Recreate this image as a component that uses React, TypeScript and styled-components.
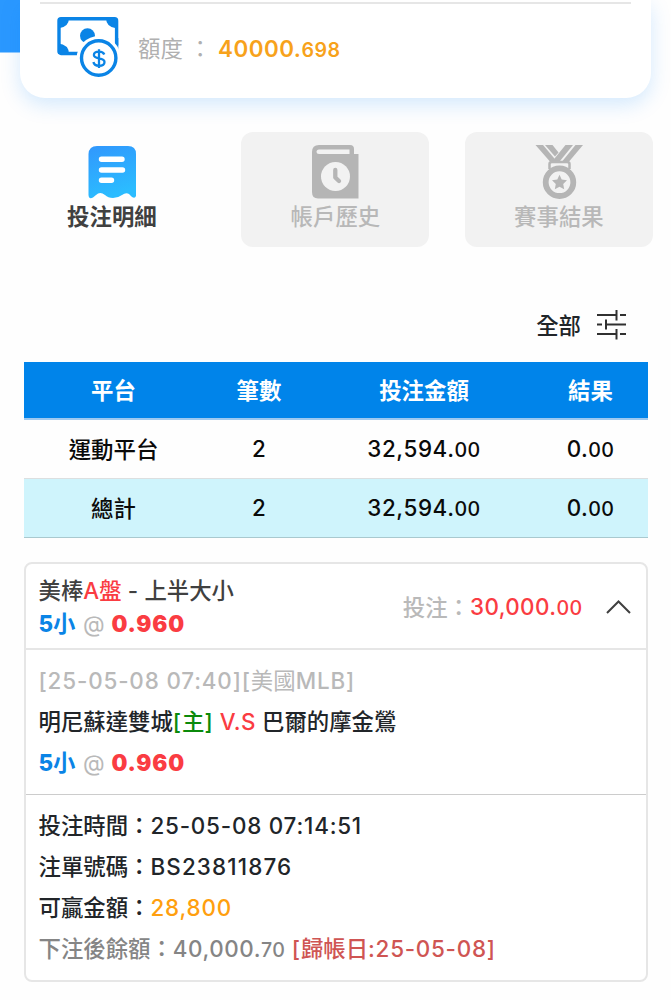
import React from "react";
import styled, { createGlobalStyle, css } from "styled-components";

const GlobalStyle = createGlobalStyle`
  *, *::before, *::after { box-sizing: border-box; }
  body {
    margin: 0;
    background: #fefefe;
    color: #212529;
    font-family: Inter, "Noto Sans CJK TC", sans-serif;
    font-size: 22.4px;
    font-weight: 500;
    overflow-x: hidden;
  }
`;

const Page = styled.main`
  width: 671px;
  height: 1000px;
  overflow: hidden;
`;

const Banner = styled.header`
  height: 132px;
  padding: 0 20px;
  background: linear-gradient(90deg, #2a98ff 0 20px, transparent 20px) 0 0 / 100% 52.5px no-repeat;
`;

const WalletCard = styled.section`
  width: 631px;
  height: 98px;
  padding: 2px 20px 0;
  border-radius: 0 0 25px 25px;
  background: #fff;
  box-shadow: 0 7px 20px rgba(0, 130, 250, 0.17);
`;

const WalletRow = styled.div`
  display: flex;
  width: 591px;
  height: 95px;
  padding: 13px 0 0 17px;
  border-top: 2px solid #e6e6e6;
`;

const WalletLabel = styled.span`
  width: 80px;
  margin-left: 19px;
  line-height: 64px;
  color: #b0b0b0;
  white-space: pre;
  font-weight: 400;
`;

type Tone = "red" | "blue" | "orange" | "muted" | "grey" | "green" | "brick";

const tones: Record<Tone, string> = {
  red: "#fa3c42",
  blue: "#0a84e6",
  orange: "#ff9f0f",
  muted: "#b9b9b9",
  grey: "#858585",
  green: "#0b8a0b",
  brick: "#cf5553",
};

const Ink = styled.span<{ $tone: Tone; $weight?: number }>`
  color: ${(p) => tones[p.$tone]};
  font-weight: ${(p) => p.$weight ?? 500};
`;

const Latin = styled.span<{ $track?: number; $weight?: number }>`
  letter-spacing: ${(p) => p.$track ?? 0.75}px;
  font-weight: ${(p) => p.$weight ?? 550};
`;

const Cents = styled.small`
  font-size: 19.6px;
  letter-spacing: 0.4px;
`;

const Balance = styled.strong`
  line-height: 64px;
  color: #f7a21b;
  font-weight: 600;
  letter-spacing: 0.5px;
`;

const Tabs = styled.nav`
  display: grid;
  grid-template-columns: repeat(3, 188px);
  gap: 35.5px;
  padding-left: 17.9px;
`;

const Tab = styled.button<{ $active?: boolean }>`
  display: flex;
  flex-direction: column;
  align-items: center;
  height: 115px;
  padding: 12px 0 0;
  border: 0;
  border-radius: 12px;
  background: ${(p) => (p.$active ? "transparent" : "#f2f2f2")};
  color: ${(p) => (p.$active ? "#404040" : "#b8b8b8")};
  font: inherit;
  font-weight: ${(p) => (p.$active ? 700 : 500)};
  line-height: 34px;
  svg { display: block; height: 56px; flex: none; }
`;

const Filter = styled.div`
  display: flex;
  justify-content: flex-end;
  align-items: center;
  gap: 15px;
  height: 40px;
  margin: 58px 44px 0 0;
  line-height: 36px;
  span { padding-top: 1px; }
`;

const Table = styled.table`
  width: 624px;
  margin: 16.5px 0 0 23.5px;
  border-collapse: separate;
  border-spacing: 0;
  table-layout: fixed;
  color: #0a0a0a;
  text-align: center;
`;

const HeadCell = styled.th<{ $width: number }>`
  width: ${(p) => p.$width}px;
  height: 58px;
  padding: 0 0 2px;
  border-bottom: 2px solid #9ec9f0;
  background: #0084ea;
  color: #fff;
  font-weight: 700;
`;

const Cell = styled.td<{ $total?: boolean; $name?: boolean }>`
  height: 59px;
  padding: 0 0 ${(p) => (p.$name ? 2 : 0)}px;
  border-bottom: 1.5px solid #dcdfe0;
  ${(p) =>
    p.$total &&
    css`
      background: #cff4fc;
      border-bottom-color: #a9c9cf;
    `}
`;

const Bet = styled.article`
  width: 624px;
  height: 420px;
  margin: 24px 0 0 23.5px;
  border: 2px solid #e6e6e6;
  border-radius: 8px;
  background: #fff;
`;

const BetHead = styled.header`
  display: flex;
  align-items: center;
  justify-content: space-between;
  height: 86px;
  padding: 3px 15px 0 13px;
  border-bottom: 2px solid #e6e6e6;
  color: #404040;
  line-height: 33px;
`;

const Stake = styled.div`
  display: flex;
  align-items: center;
  svg { margin-left: 23px; }
`;

const Match = styled.section`
  height: 145.5px;
  padding: 11.5px 13px 0;
  border-bottom: 1.5px solid #ccc;
  line-height: 40.8px;
`;

const Details = styled.section`
  padding: 10.3px 13px 0;
  line-height: 41px;
`;

const Line = styled.div`
  white-space: pre;
`;

const MoneyIcon = () => (
  <svg width="62" height="62" viewBox="0 0 62 62">
    <rect x="2" y="1.700" width="57.600" height="34.800" rx="2" fill="none" stroke="#0a84e6" strokeWidth="3.400" />
    <path fill="#0a84e6" d="M1 1H12Q12 10.500 1 11.500ZM60 1H49Q49 10.500 60 11.500ZM1 37H12Q12 27.500 1 26.500Z" />
    <circle cx="30.500" cy="18.700" r="7.500" fill="#0a84e6" />
    <circle cx="41.700" cy="41" r="22" fill="#fff" />
    <path fill="#0a84e6" d="M58 21H61.300V28.500L58 25.500Z" />
    <circle cx="41.700" cy="41" r="17.200" fill="#fff" stroke="#0a84e6" strokeWidth="3.400" />
    <path fill="none" stroke="#0a84e6" strokeWidth="2.300" d="M47.300 37.500C46.500 35.300 44.500 34.600 42 34.600C39 34.600 36.900 36 36.900 38.100C36.900 43 47.500 39.500 47.500 45C47.500 47.500 45 48.800 42 48.800C39 48.800 36.800 47.500 36.500 45M42 32.200V51" />
  </svg>
);

const ReceiptIcon = () => (
  <svg width="48" height="56" viewBox="0 0 48 56">
    <defs>
      <linearGradient id="receipt" x1="0" y1="0" x2="0.3" y2="1">
        <stop offset="0" stopColor="#3197fd" />
        <stop offset="1" stopColor="#2bbcff" />
      </linearGradient>
    </defs>
    <path fill="url(#receipt)" d="M9 2H40Q48 2 48 10V52Q47 55 44 53L41 50Q38 48 34 51Q30 54 25 54Q20 54 17 51Q12 47 8 51L5 53.500Q1 56 0.500 51V10Q1 2 9 2Z" />
    <path stroke="#fff" strokeWidth="5.400" strokeLinecap="round" d="M13.500 15.300H34M13.500 26H34.500M13.500 36.300H23.500" />
  </svg>
);

const HistoryIcon = () => (
  <svg width="48" height="56" viewBox="0 0 48 56">
    <path fill="#b5b5b5" fillRule="evenodd" d="M8 1H39Q43 1 43 5V10H47.500V54.500H7Q1 54.500 1 48V8Q1 1 8 1ZM8 5.500Q5.500 5.500 5.500 8Q5.500 10 8 10H38.500V5.500Z" />
    <circle cx="24.500" cy="32.500" r="14.500" fill="#f2f2f2" />
    <path fill="none" stroke="#b5b5b5" strokeWidth="4.300" strokeLinecap="round" strokeLinejoin="round" d="M24.300 26V33.500L28 37" />
  </svg>
);

const MedalIcon = () => (
  <svg width="48" height="56" viewBox="0 0 48 56">
    <g fill="#b5b5b5">
      <path d="M0.500 1H8L21.500 17H14.500Z" />
      <path d="M10 1H17.500L23.500 8.500L20 12.500Z" />
      <path d="M30.500 1H38L25 17H17.500Z" />
      <path d="M40.500 1H48L34.500 17H27.500Z" />
      <path d="M24.500 30.800L26.700 35.600L32 36.300L28.200 40L29.200 45.300L24.500 42.800L19.800 45.300L20.800 40L17 36.300L22.300 35.600Z" />
    </g>
    <g fill="none" stroke="#b5b5b5">
      <path strokeWidth="2.500" d="M14.500 25V20Q14.500 18 17 18H32Q34.500 18 34.500 20V25" />
      <circle cx="24.500" cy="38.200" r="13.800" strokeWidth="5.800" />
    </g>
  </svg>
);

const SlidersIcon = () => (
  <svg width="31" height="30" viewBox="0 0 31 30" fill="none" stroke="#303030" strokeWidth="2">
    <path d="M1 5H20.500M24 5H30M20.500 0V10.500M1 14.500H6M10 14.500H30M10 9.500V19.500M1 24H20.500M24 24H30M20.500 19V29.500" />
  </svg>
);

const ChevronUp = () => (
  <svg width="25" height="14" viewBox="0 0 25 14" fill="none" stroke="#404040" strokeWidth="2">
    <path d="M1 13L12.500 1.500L24 13" />
  </svg>
);

const Odds = () => (
  <Line>
    <Ink $tone="blue" $weight={800}>5</Ink>
    <Ink $tone="blue" $weight={600}>小</Ink><Latin $track={1.5}> </Latin>
    <Ink $tone="muted" $weight={400}>@</Ink><Latin $track={1}> </Latin>
    <Ink $tone="red"><Latin $track={0.8} $weight={900}>0.960</Latin></Ink>
  </Line>
);

const columns = [
  { name: "平台", width: 180 },
  { name: "筆數", width: 111 },
  { name: "投注金額", width: 219 },
  { name: "結果", width: 114 },
];

const rows = [
  { name: "運動平台", count: 2, stake: "32,594.", result: "0.", total: false },
  { name: "總計", count: 2, stake: "32,594.", result: "0.", total: true },
];

export default function App() {
  return (
    <Page>
      <GlobalStyle />
      <Banner>
        <WalletCard>
          <WalletRow>
            <MoneyIcon />
            <WalletLabel>額度 ：</WalletLabel>
            <Balance>40000.<Cents>698</Cents></Balance>
          </WalletRow>
        </WalletCard>
      </Banner>
      <Tabs>
        <Tab $active><ReceiptIcon />投注明細</Tab>
        <Tab><HistoryIcon />帳戶歷史</Tab>
        <Tab><MedalIcon />賽事結果</Tab>
      </Tabs>
      <Filter><span>全部</span><SlidersIcon /></Filter>
      <Table>
        <thead>
          <tr>{columns.map((c) => <HeadCell key={c.name} $width={c.width}>{c.name}</HeadCell>)}</tr>
        </thead>
        <tbody>
          {rows.map((r) => (
            <tr key={r.name}>
              <Cell $total={r.total} $name>{r.name}</Cell>
              <Cell $total={r.total}><Latin $track={0}>{r.count}</Latin></Cell>
              <Cell $total={r.total}><Latin $track={0.6}>{r.stake}<Cents>00</Cents></Latin></Cell>
              <Cell $total={r.total}><Latin $track={0.4}>{r.result}<Cents>00</Cents></Latin></Cell>
            </tr>
          ))}
        </tbody>
      </Table>
      <Bet>
        <BetHead>
          <div>
            <Line>美棒<Ink $tone="red">A盤</Ink><Latin $track={0.2}> - </Latin>上半大小</Line>
            <Odds />
          </div>
          <Stake>
            <Ink $tone="muted">投注：</Ink>
            <Ink $tone="red"><Latin $track={0.4}>30,000.<Cents>00</Cents></Latin></Ink>
            <ChevronUp />
          </Stake>
        </BetHead>
        <Match>
          <Line><Ink $tone="muted" $weight={400}><Latin $track={0.85} $weight={450}>[25-05-08 07:40][</Latin>美國<Latin $track={0.85} $weight={450}>MLB]</Latin></Ink></Line>
          <Line>明尼蘇達雙城<Ink $tone="green"><Latin $track={1} $weight={500}>[</Latin>主<Latin $track={0.8} $weight={500}>]</Latin></Ink><Latin $track={0.3} $weight={500}> <Ink $tone="red">V.S</Ink> </Latin>巴爾的摩金鶯</Line>
          <Odds />
        </Match>
        <Details>
          <Line>投注時間：<Latin $track={0.8}>25-05-08 07:14:51</Latin></Line>
          <Line>注單號碼：<Latin $track={1.15}>BS23811876</Latin></Line>
          <Line>可贏金額：<Ink $tone="orange"><Latin $track={0.8}>28,800</Latin></Ink></Line>
          <Line><Ink $tone="grey">下注後餘額：<Latin $track={0.55} $weight={500}>40,000.<Cents>70</Cents> </Latin></Ink><Ink $tone="brick"><Latin $weight={500}>[</Latin>歸帳日<Latin $track={0.75} $weight={520}>:25-05-08]</Latin></Ink></Line>
        </Details>
      </Bet>
    </Page>
  );
}
